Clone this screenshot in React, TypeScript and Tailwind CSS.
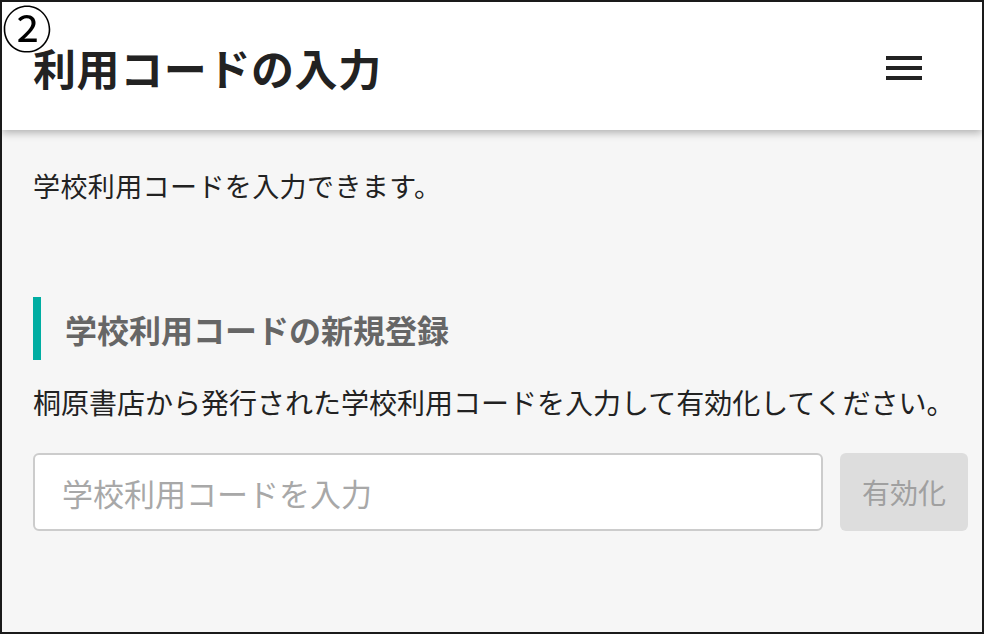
export default function App() {
  return (
    <div
      className="relative w-[984px] h-[634px] overflow-hidden border-2 border-[#1a1a1a] bg-[#f6f6f6] flex flex-col"
      style={{ fontFamily: '"Noto Sans CJK JP", "Noto Sans", sans-serif' }}
    >
      <span className="absolute z-20 left-[0px] top-[-3px] text-[50px] leading-[1.1] text-black">②</span>
      <header className="h-[128px] shrink-0 bg-white flex items-center justify-between pl-[31px] pr-[60px] shadow-[0_3px_8px_rgba(0,0,0,0.28)] z-10">
        <h1 className="text-[43px] font-bold text-[#222] leading-none mt-[2px] tracking-[0.6px]">利用コードの入力</h1>
        <button className="flex flex-col gap-[6px] mt-[4px]">
          <span className="block w-[36px] h-[4px] bg-[#222]" />
          <span className="block w-[36px] h-[4px] bg-[#222]" />
          <span className="block w-[36px] h-[4px] bg-[#222]" />
        </button>
      </header>
      <main className="flex flex-col pl-[31px] pr-[14px]">
        <p className="mt-[42px] text-[27px] leading-none text-[#222] tracking-[0.4px]">学校利用コードを入力できます。</p>
        <div className="mt-[98px] flex items-center h-[63px] border-l-[8px] border-[#00ada2] pl-[24px]">
          <h2 className="text-[32px] font-bold text-[#666] leading-none">学校利用コードの新規登録</h2>
        </div>
        <p className="mt-[28px] text-[28px] leading-none text-[#222]">
          桐原書店から発行された学校利用コードを入力して有効化してください。
        </p>
        <div className="mt-[37px] flex gap-[17px]">
          <input
            placeholder="学校利用コードを入力"
            className="w-[791px] h-[78px] rounded-[6px] border-2 border-[#cccccc] bg-white px-[27px] text-[31px] text-[#222] placeholder:text-[#a8a8a8] outline-none"
          />
          <button className="w-[128px] h-[78px] rounded-[6px] bg-[#dddddd] text-[28px] text-[#a0a0a0]">有効化</button>
        </div>
      </main>
    </div>
  );
}
